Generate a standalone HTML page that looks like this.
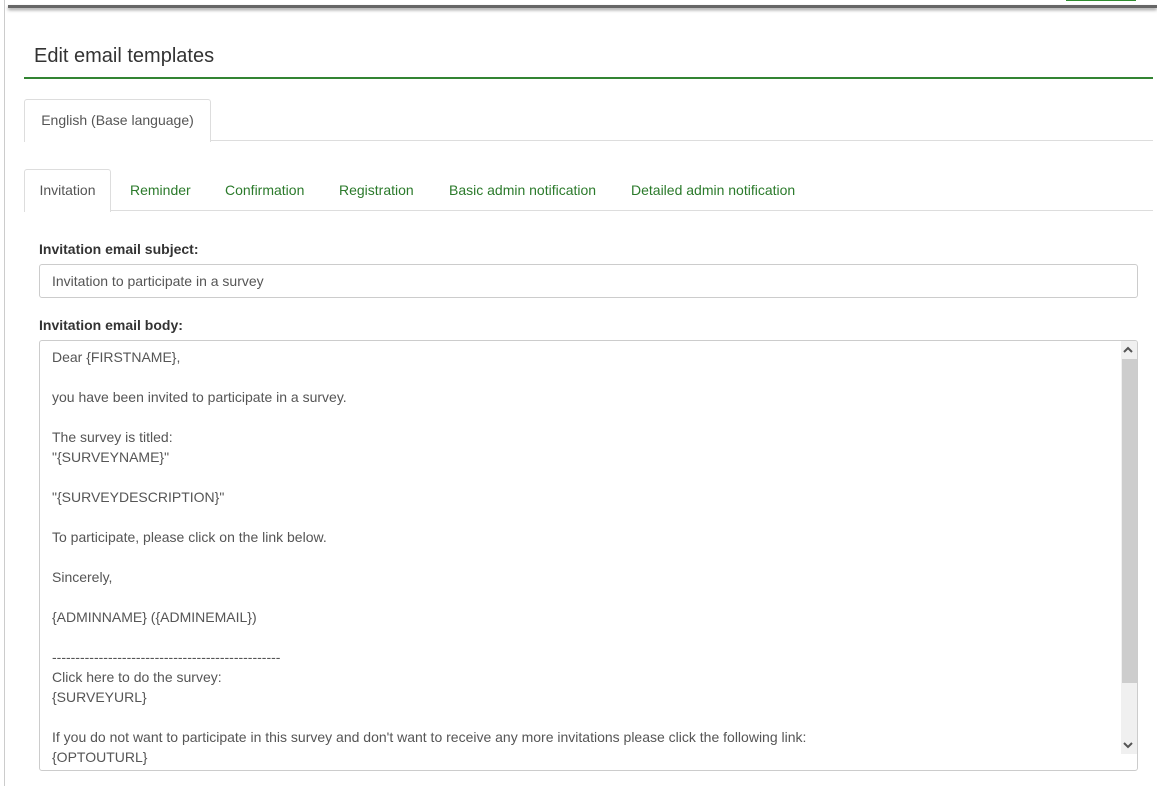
<!DOCTYPE html>
<html><head><style>
body{margin:0;width:1157px;height:786px;overflow:hidden;background:#fff;font-family:"Liberation Sans",sans-serif;font-size:14px;color:#333;position:relative}
.a{position:absolute}
.tab{position:absolute;top:1px;height:41px;line-height:41px;font-size:14px;color:#2b7a2b}
</style></head><body>
<div class="a" style="left:4px;top:0;width:1px;height:786px;background:#ccc"></div>
<div class="a" style="left:8px;top:5px;width:1149px;height:3px;background:#666;box-shadow:0 2px 3px #999"></div>
<div class="a" style="left:1066px;top:0;width:70px;height:1px;background:#2e8b2e"></div>
<div class="a" style="left:34px;top:45px;font-size:20px;color:#333">Edit email templates</div>
<div class="a" style="left:24px;top:77px;width:1129px;height:2px;background:#328432"></div>
<div class="a" style="left:24px;top:140px;width:1129px;height:1px;background:#ddd"></div>
<div class="a" style="left:24px;top:99px;width:185px;height:42px;border:1px solid #ddd;border-bottom:none;border-radius:3px 3px 0 0;background:#fff;line-height:41px;text-align:center;color:#555">English (Base language)</div>
<div class="a" style="left:24px;top:210px;width:1129px;height:1px;background:#ddd"></div>
<div class="a" style="left:24px;top:169px;width:1129px;height:42px">
<div class="a" style="left:0;top:0;width:85px;height:42px;border:1px solid #ddd;border-bottom:none;border-radius:3px 3px 0 0;background:#fff;line-height:41px;text-align:center;color:#555">Invitation</div>
<div class="tab" style="left:106px">Reminder</div>
<div class="tab" style="left:201px">Confirmation</div>
<div class="tab" style="left:315px">Registration</div>
<div class="tab" style="left:425px">Basic admin notification</div>
<div class="tab" style="left:607px">Detailed admin notification</div>
</div>
<div class="a" style="left:39px;top:241px;font-weight:bold">Invitation email subject:</div>
<div class="a" style="left:39px;top:264px;height:32px;border:1px solid #ccc;border-radius:3px;line-height:32px;padding-left:12px;width:1085px;color:#555">Invitation to participate in a survey</div>
<div class="a" style="left:39px;top:317px;font-weight:bold">Invitation email body:</div>
<div class="a" style="left:39px;top:340px;width:1097px;height:429px;border:1px solid #ccc;border-radius:3px;overflow:hidden">
<div class="a" style="left:12px;top:6px;line-height:20px;color:#555;white-space:pre">Dear {FIRSTNAME},

you have been invited to participate in a survey.

The survey is titled:
"{SURVEYNAME}"

"{SURVEYDESCRIPTION}"

To participate, please click on the link below.

Sincerely,

{ADMINNAME} ({ADMINEMAIL})

-------------------------------------------------
Click here to do the survey:
{SURVEYURL}

If you do not want to participate in this survey and don't want to receive any more invitations please click the following link:
{OPTOUTURL}</div>
<div class="a" style="left:1081px;top:0;width:16px;height:413px;background:#f0f0f0"></div>
<div class="a" style="left:1082px;top:18px;width:15px;height:324px;background:#cdcdcd"></div>
<svg class="a" style="left:1083px;top:5px" width="10" height="8"><path d="M1 6 L5 2 L9 6" stroke="#555" stroke-width="2" fill="none"/></svg>
<svg class="a" style="left:1083px;top:400px" width="10" height="8"><path d="M1 2 L5 6 L9 2" stroke="#555" stroke-width="2" fill="none"/></svg>
</div>
</body></html>
